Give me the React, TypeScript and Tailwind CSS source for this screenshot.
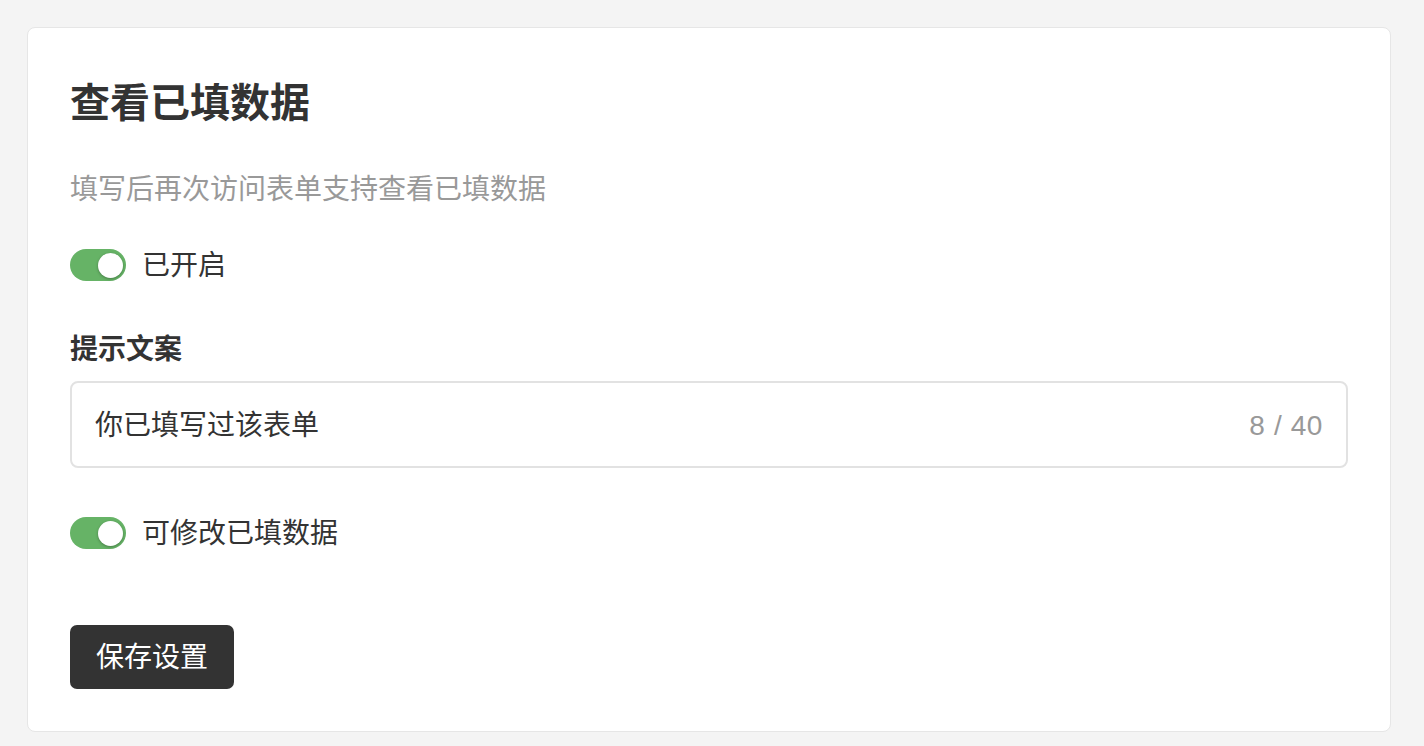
import React from "react";

function Toggle() {
  return (
    <div className="w-[56px] h-[32px] rounded-full bg-[#66b366] relative shrink-0">
      <div className="absolute right-[3px] top-[3.5px] w-[25px] h-[25px] rounded-full bg-white shadow-[0_1px_3px_rgba(0,0,0,0.3)]" />
    </div>
  );
}

export default function App() {
  const font = { fontFamily: '"Liberation Sans", "Noto Sans CJK SC", sans-serif' };
  return (
    <div className="min-h-[746px] w-full bg-[#f4f4f4] pt-[27px] pl-[27px]" style={font}>
      <div className="w-[1364px] bg-white border border-[#e6e6e6] rounded-[8px] px-[42px] pt-[47px] pb-[42px]">
        <h1 className="text-[40px] leading-[56px] font-bold text-[#333]">查看已填数据</h1>
        <p className="mt-[39px] text-[28px] leading-[40px] text-[#999]">填写后再次访问表单支持查看已填数据</p>
        <div className="mt-[39px] flex items-center gap-[16px] h-[32px]">
          <Toggle />
          <span className="text-[28px] leading-[40px] text-[#333] pt-[2px]">已开启</span>
        </div>
        <div className="mt-[49px] text-[28px] leading-[40px] font-semibold text-[#333]">提示文案</div>
        <div className="mt-[11px] h-[87px] border-2 border-[#e2e2e2] rounded-[8px] flex items-center justify-between px-[23px]">
          <span className="text-[28px] leading-[40px] text-[#333] pt-[2px]">你已填写过该表单</span>
          <span className="text-[28px] leading-[40px] text-[#999] tracking-[0.6px] pt-[2px]">8 / 40</span>
        </div>
        <div className="mt-[49px] flex items-center gap-[16px] h-[32px]">
          <Toggle />
          <span className="text-[28px] leading-[40px] text-[#333] pt-[2px]">可修改已填数据</span>
        </div>
        <button className="mt-[76px] h-[64px] px-[26px] rounded-[7px] bg-[#333] text-white text-[28px] leading-[40px] block pt-[2px]">保存设置</button>
      </div>
    </div>
  );
}
